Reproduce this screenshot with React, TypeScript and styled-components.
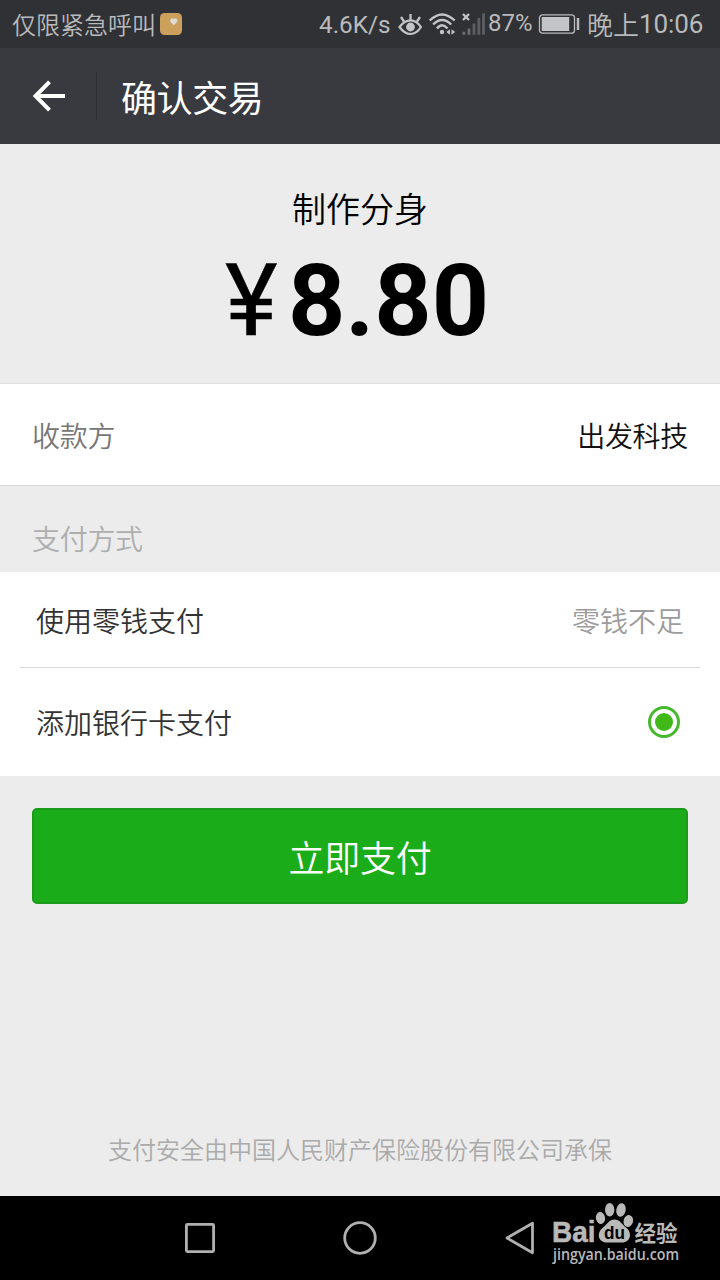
import React from 'react';
import styled, { createGlobalStyle } from 'styled-components';

const GlobalStyle = createGlobalStyle`
  * { box-sizing: border-box; }
  body {
    margin: 0;
    background: #ececec;
    font-family: Roboto, "Noto Sans CJK SC", sans-serif;
  }
`;

const Screen = styled.div`
  width: 720px;
  height: 1280px;
  display: flex;
  flex-direction: column;
  background: #ececec;
  overflow: hidden;
`;

const StatusBar = styled.div`
  height: 48px;
  display: flex;
  align-items: center;
  padding: 0 16px 0 12px;
  background: #303135;
  color: #b9babb;
  font-size: 24px;
  line-height: 48px;
  white-space: nowrap;
  svg { display: block; flex: none; }
`;

const Carrier = styled.span`
  width: 148px;
  font-family: "Noto Sans CJK SC", sans-serif;
  font-weight: 350;
  height: 48px;
`;

const StatusText = styled.span<{ $width: number; $size?: number; $line?: number }>`
  width: ${(p) => p.$width}px;
  font-size: ${(p) => p.$size ?? 24}px;
  line-height: ${(p) => p.$line ?? 48}px;
  height: 48px;
`;

const Spacer = styled.div`
  flex: 1;
`;

const Clock = styled.span`
  display: flex;
  height: 48px;
  width: 117px;
  margin-left: 7px;
  font-size: 26px;
  line-height: 49px;
  letter-spacing: -0.1px;
`;

const ClockPrefix = styled.span`
  font-family: "Noto Sans CJK SC", sans-serif;
  font-weight: 350;
  line-height: 47px;
  width: 52px;
`;

const Header = styled.header`
  height: 96px;
  display: flex;
  align-items: center;
  background: #393a3f;
`;

const BackButton = styled.button`
  width: 97px;
  height: 48px;
  padding: 0 0 0 31px;
  border: 0;
  border-right: 1px solid #2e2f33;
  background: none;
  display: flex;
  align-items: center;
`;

const Title = styled.h1`
  margin: 0 0 0 24px;
  font: 400 36px/96px "Noto Sans CJK SC", sans-serif;
  letter-spacing: -0.4px;
  color: #fff;
  height: 96px;
`;

const Summary = styled.section`
  height: 240px;
  display: flex;
  flex-direction: column;
  align-items: center;
  border-bottom: 1px solid #dedede;
  padding-top: 40px;
`;

const Product = styled.div`
  font: 350 34px/48px "Noto Sans CJK SC", sans-serif;
  color: #000;
  height: 48px;
`;

const Amount = styled.div`
  display: flex;
  margin-top: 10px;
  margin-right: 6px;
  font-size: 100px;
  line-height: 117px;
  height: 117px;
  font-weight: 700;
  color: #000;
`;

const Currency = styled.span`
  width: 63px;
  font-weight: 400;
  -webkit-text-stroke: 0.4px #000;
`;

const Row = styled.div<{ $height: number; $inset: number }>`
  height: ${(p) => p.$height}px;
  padding: 0 ${(p) => p.$inset}px;
  display: flex;
  align-items: center;
  justify-content: space-between;
  background: #fff;
`;

const Payee = styled.section`
  border-bottom: 1px solid #d6d6d6;
`;

const Label = styled.span<{ $color: string; $spacing?: number }>`
  font: 350 28px/40px "Noto Sans CJK SC", sans-serif;
  letter-spacing: ${(p) => p.$spacing ?? 0}px;
  color: ${(p) => p.$color};
`;

const SectionTitle = styled.div`
  height: 86px;
  padding: 32px 32px 0;
`;

const Methods = styled.section`
  height: 204px;
  background: #fff;
`;

const Divider = styled.div`
  height: 1px;
  margin: 0 20px;
  background: #dadada;
`;

const Radio = styled.span`
  width: 32px;
  height: 32px;
  margin-right: 4px;
  border: 3px solid #45b82c;
  border-radius: 50%;
  display: grid;
  place-items: center;
  &::after {
    content: "";
    width: 18px;
    height: 18px;
    border-radius: 50%;
    background: #3fb917;
  }
`;

const PayButton = styled.button`
  margin: 32px 32px 0;
  height: 96px;
  padding: 0;
  border: 2px solid #1a9c1a;
  border-radius: 5px;
  background: #1aad19;
  color: #fff;
  font: 350 36px/92px "Noto Sans CJK SC", sans-serif;
  letter-spacing: -0.3px;
`;

const Insurance = styled.footer`
  margin-top: auto;
  height: 64px;
  text-align: center;
  color: #aaa;
  font: 350 24px/34px "Noto Sans CJK SC", sans-serif;
`;

const NavBar = styled.nav`
  height: 84px;
  flex: none;
  display: flex;
  align-items: center;
  justify-content: center;
  gap: 120px;
  background: #000;
  position: relative;
  svg { display: block; }
`;

const Watermark = styled.div`
  position: absolute;
  left: 548px;
  top: 4px;
`;

const App = () => (
  <Screen>
    <GlobalStyle />
    <StatusBar>
      <Carrier>仅限紧急呼叫</Carrier>
      <svg width="22" height="22" viewBox="0 0 22 22">
        <rect width="22" height="22" rx="4.5" fill="#cb9f5c" />
        <path d="M13.8 12.3L10.6 8.9a2.1 2.1 0 0 1 3.2-2.8 2.1 2.1 0 0 1 3.2 2.8z" fill="#dedbd3" />
      </svg>
      <Spacer />
      <StatusText $width={79} $size={24.3} $line={50}>4.6K/s</StatusText>
      <svg width="24" height="24" viewBox="0 0 24 24" fill="none" stroke="#c3c4c5" strokeWidth="2.200">
        <path d="M1.500 15Q6.500 8.300 12.500 8.300T23 15Q18.500 22 12.500 22T1.500 15Z" />
        <path d="M12.500 8V2M6 9.500L3 5M19 9.500L22 5" strokeWidth="2.300" />
        <circle cx="12.500" cy="15" r="4.400" fill="#c3c4c5" stroke="none" />
      </svg>
      <svg width="66" height="26" viewBox="0 0 66 26" fill="none" stroke="#c3c4c5" strokeWidth="2.400">
        <path d="M7.700 9.500Q20-2.700 32.700 9.500M11.200 13.500Q20 4.500 29.200 13.500M15 17.500Q20 11 25.500 17.500" />
        <circle cx="20" cy="21" r="2.200" fill="#c3c4c5" stroke="none" />
        <path d="M24.300 21L28 18.300v5.400zM33.200 21L29.500 18.300v5.400z" fill="#c3c4c5" stroke="none" />
        <path d="M41 3L47 9M47 3L41 9" strokeWidth="2.300" />
        <path d="M41.800 20.800V23.700M47 17.500V23.700" stroke="#6c6d70" strokeWidth="2.800" />
        <path d="M52 12.500V23.700M56.800 7V23.700M61.500 2.300V23.700" stroke="#5d5e61" strokeWidth="2.800" />
      </svg>
      <StatusText $width={50} $line={47}>87%</StatusText>
      <svg width="42" height="20" viewBox="0 0 42 20" fill="none">
        <rect x="1.500" y="0.800" width="35" height="18.400" rx="3" stroke="#b9babb" strokeWidth="1.300" />
        <rect x="3.700" y="3" width="27.500" height="14" fill="#c3c4c5" />
        <path d="M40 4V16" stroke="#b9babb" strokeWidth="2.500" />
      </svg>
      <Clock>
        <ClockPrefix>晚上</ClockPrefix>
        10:06
      </Clock>
    </StatusBar>
    <Header>
      <BackButton aria-label="返回">
        <svg width="36" height="36" viewBox="0 0 36 36" fill="none" stroke="#fff" strokeWidth="4">
          <path d="M34 18H5M18.500 3.800L4.500 18L18.500 32.200" />
        </svg>
      </BackButton>
      <Title>确认交易</Title>
    </Header>
    <Summary>
      <Product>制作分身</Product>
      <Amount>
        <Currency>¥</Currency>
        8.80
      </Amount>
    </Summary>
    <Payee>
      <Row $height={101} $inset={32}>
        <Label $color="#777" $spacing={-0.3}>收款方</Label>
        <Label $color="#111" $spacing={-0.3}>出发科技</Label>
      </Row>
    </Payee>
    <SectionTitle>
      <Label $color="#aeaeae" $spacing={-0.3}>支付方式</Label>
    </SectionTitle>
    <Methods>
      <Row $height={95} $inset={36}>
        <Label $color="#333">使用零钱支付</Label>
        <Label $color="#9c9c9c">零钱不足</Label>
      </Row>
      <Divider />
      <Row $height={108} $inset={36}>
        <Label $color="#333">添加银行卡支付</Label>
        <Radio />
      </Row>
    </Methods>
    <PayButton>立即支付</PayButton>
    <Insurance>支付安全由中国人民财产保险股份有限公司承保</Insurance>
    <NavBar>
      <svg width="40" height="40" viewBox="0 0 40 40" fill="none" stroke="#b0b0b0" strokeWidth="2.800">
        <rect x="6.400" y="6.400" width="27.200" height="27.200" rx="1" />
      </svg>
      <svg width="40" height="40" viewBox="0 0 40 40" fill="none" stroke="#b0b0b0" strokeWidth="2.800">
        <circle cx="20" cy="20" r="15.300" />
      </svg>
      <svg width="40" height="40" viewBox="0 0 40 40" fill="none" stroke="#b0b0b0" strokeWidth="2.800" strokeLinejoin="round">
        <path d="M7 20L32.500 5.200V34.800Z" />
      </svg>
      <Watermark>
        <svg width="140" height="72" viewBox="0 0 140 72" fill="#b9b9b9">
          <text x="4" y="42" fontFamily="Liberation Sans" fontWeight="700" fontSize="29" textLength="43.500" lengthAdjust="spacingAndGlyphs" stroke="#b9b9b9" strokeWidth="0.500">Bai</text>
          <ellipse cx="52.500" cy="18" rx="4.600" ry="6" transform="rotate(-10 52.500 18)" />
          <ellipse cx="61.700" cy="9.700" rx="4.700" ry="6.800" />
          <ellipse cx="73" cy="10" rx="4.700" ry="6.800" transform="rotate(10 73 10)" />
          <ellipse cx="80.300" cy="21" rx="4.700" ry="6" transform="rotate(15 80.300 21)" />
          <path d="M66.500 19.500C72 19.500 73.500 24 78 27.500C84.500 32.500 83 42.500 74 42.500H59C49.500 42.500 48.500 32.500 55 27.500C59.500 24 61 19.500 66.500 19.500Z" />
          <text x="56" y="38.500" fill="#000" fontFamily="Liberation Sans" fontWeight="700" fontSize="18" textLength="21" lengthAdjust="spacingAndGlyphs">du</text>
          <text x="86.500" y="41" fontFamily="Noto Sans CJK SC" fontWeight="700" fontSize="21.500" textLength="43">经验</text>
          <text x="5" y="59.500" fontFamily="Open Sans" fontWeight="600" fontSize="15.500" textLength="126" lengthAdjust="spacingAndGlyphs">jingyan.baidu.com</text>
        </svg>
      </Watermark>
    </NavBar>
  </Screen>
);

export default App;
